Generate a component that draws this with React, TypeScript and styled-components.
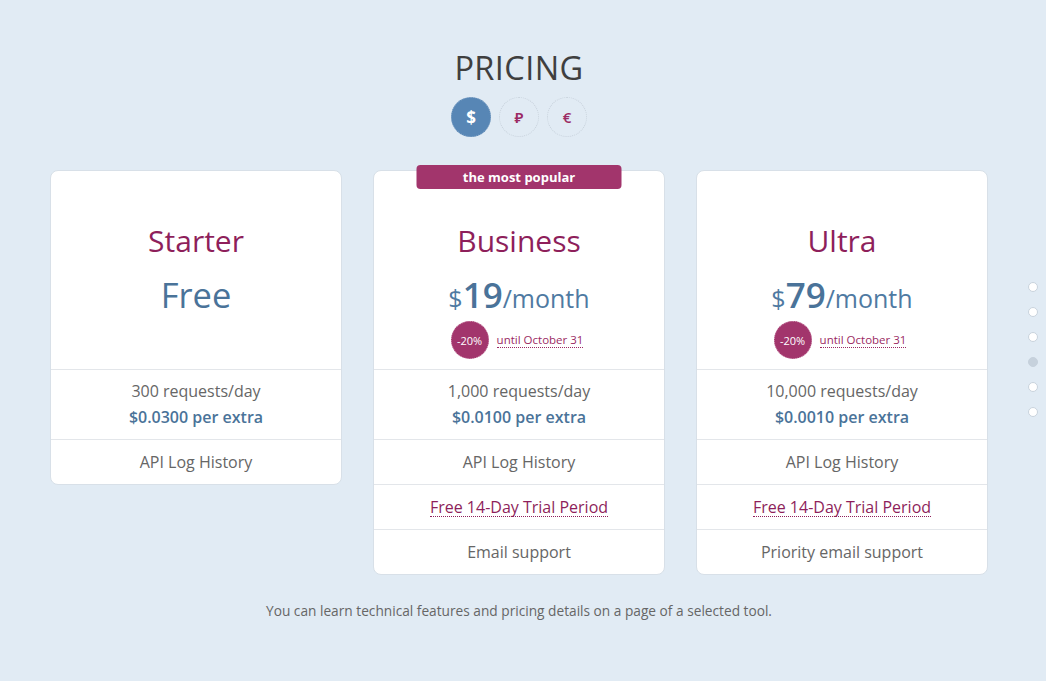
import React from "react";
import styled, { createGlobalStyle } from "styled-components";

const Global = createGlobalStyle`
  html, body { margin: 0; padding: 0; background: #e1ebf4; }
  body { font-family: "Open Sans", "Noto Sans", sans-serif; color: #666; }
  * { box-sizing: border-box; }
`;

const Page = styled.div`
  width: 1046px;
  height: 681px;
  position: relative;
  overflow: hidden;
  padding: 50px 0 0 50px;
`;

const Main = styled.main`
  width: 938px;
  display: flex;
  flex-direction: column;
  align-items: center;
`;

const Title = styled.h1`
  margin: 0;
  font-size: 32.5px;
  line-height: 36px;
  font-weight: 400;
  color: #3f3f3f;
  letter-spacing: 0.4px;
`;

const Currencies = styled.div`
  display: flex;
  gap: 8px;
  margin-top: 11px;
`;

const CurrencyButton = styled.button<{ $active?: boolean }>`
  width: 40px;
  height: 40px;
  border-radius: 50%;
  border: 1px dotted ${(p) => (p.$active ? "#7fa2c6" : "#c8d2dc")};
  background: ${(p) => (p.$active ? "#5786b5" : "transparent")};
  color: ${(p) => (p.$active ? "#ffffff" : "#9b2a63")};
  font-family: inherit;
  font-size: ${(p) => (p.$active ? "17px" : "15px")};
  font-weight: ${(p) => (p.$active ? 700 : 600)};
  display: flex;
  align-items: center;
  justify-content: center;
  padding: 0;
  cursor: pointer;
`;

const Cards = styled.div`
  display: flex;
  align-items: flex-start;
  gap: 31px;
  margin-top: 33px;
  width: 100%;
`;

const Card = styled.section`
  position: relative;
  width: 292px;
  flex: 0 0 292px;
  background: #fff;
  border: 1px solid #d8e0e8;
  border-radius: 8px;
`;

const Popular = styled.div`
  position: absolute;
  top: -6px;
  left: 50%;
  transform: translateX(-50%);
  width: 205px;
  height: 24px;
  border-radius: 4px;
  background: #a2356c;
  color: #fff;
  font-size: 13px;
  font-weight: 700;
  display: flex;
  align-items: center;
  justify-content: center;
`;

const Header = styled.div`
  height: 199px;
  border-bottom: 1px solid #e3e6ea;
  display: flex;
  flex-direction: column;
  align-items: center;
  padding-top: 52px;
`;

const PlanName = styled.h2`
  margin: 0;
  font-size: 30px;
  line-height: 36px;
  font-weight: 400;
  color: #8e1f5b;
`;

const Price = styled.div`
  margin-top: 16px;
  height: 40px;
  display: flex;
  align-items: baseline;
  justify-content: center;
  color: #4f7aa2;
  font-size: 25px;
  line-height: 40px;
`;

const Amount = styled.span<{ $big?: boolean }>`
  font-size: ${(p) => (p.$big ? "34.5px" : "35px")};
  font-weight: ${(p) => (p.$big ? 400 : 600)};
  color: #4a7399;
`;

const Discount = styled.div`
  margin-top: 6px;
  display: flex;
  align-items: center;
  gap: 8px;
  margin-left: -4px;
`;

const Badge = styled.span`
  width: 38px;
  height: 38px;
  border-radius: 50%;
  background: #a2356c;
  border: 1px dotted #c77aa0;
  color: #fff;
  font-size: 11px;
  display: flex;
  align-items: center;
  justify-content: center;
`;

const Until = styled.span`
  font-size: 11.5px;
  color: #9b2a63;
  border-bottom: 1px dotted #9b2a63;
  line-height: 14px;
`;

const Row = styled.div<{ $tall?: boolean }>`
  display: flex;
  flex-direction: column;
  align-items: center;
  justify-content: center;
  height: ${(p) => (p.$tall ? "70px" : "45px")};
  padding-bottom: ${(p) => (p.$tall ? "2px" : "0")};
  border-bottom: 1px solid #e3e6ea;
  font-size: 16px;
  color: #666;
  line-height: 26px;
  &:last-child { border-bottom: none; height: 44px; }
`;

const Extra = styled.span`
  font-weight: 600;
  color: #4a7399;
`;

const Trial = styled.span`
  color: #8e1f5b;
  font-weight: 500;
  line-height: 18px;
  border-bottom: 1px dotted #8e1f5b;
`;

const Footer = styled.p`
  margin: 26px 0 0;
  font-size: 13.7px;
  color: #666;
`;

const SideNav = styled.nav`
  position: absolute;
  right: 8px;
  top: 282px;
  display: flex;
  flex-direction: column;
  gap: 15px;
`;

const Dot = styled.span<{ $active?: boolean }>`
  width: 10px;
  height: 10px;
  border-radius: 50%;
  background: ${(p) => (p.$active ? "#c6d1dc" : "#fff")};
  border: 1px solid ${(p) => (p.$active ? "#c6d1dc" : "#c9d3dd")};
`;

type Plan = {
  name: string;
  price?: string;
  free?: boolean;
  requests: string;
  extra: string;
  popular?: boolean;
  trial?: boolean;
  support?: string;
};

const plans: Plan[] = [
  { name: "Starter", free: true, requests: "300 requests/day", extra: "$0.0300 per extra" },
  {
    name: "Business",
    price: "19",
    requests: "1,000 requests/day",
    extra: "$0.0100 per extra",
    popular: true,
    trial: true,
    support: "Email support",
  },
  {
    name: "Ultra",
    price: "79",
    requests: "10,000 requests/day",
    extra: "$0.0010 per extra",
    trial: true,
    support: "Priority email support",
  },
];

export default function App() {
  return (
    <Page>
      <Global />
      <Main>
        <Title>PRICING</Title>
        <Currencies>
          <CurrencyButton $active>$</CurrencyButton>
          <CurrencyButton>₽</CurrencyButton>
          <CurrencyButton>€</CurrencyButton>
        </Currencies>
        <Cards>
          {plans.map((p) => (
            <Card key={p.name}>
              {p.popular && <Popular>the most popular</Popular>}
              <Header>
                <PlanName>{p.name}</PlanName>
                {p.free ? (
                  <Price>
                    <Amount $big>Free</Amount>
                  </Price>
                ) : (
                  <>
                    <Price>
                      $<Amount>{p.price}</Amount>/month
                    </Price>
                    <Discount>
                      <Badge>-20%</Badge>
                      <Until>until October 31</Until>
                    </Discount>
                  </>
                )}
              </Header>
              <Row $tall>
                <span>{p.requests}</span>
                <Extra>{p.extra}</Extra>
              </Row>
              <Row>API Log History</Row>
              {p.trial && (
                <Row>
                  <Trial>Free 14-Day Trial Period</Trial>
                </Row>
              )}
              {p.support && <Row>{p.support}</Row>}
            </Card>
          ))}
        </Cards>
        <Footer>You can learn technical features and pricing details on a page of a selected tool.</Footer>
      </Main>
      <SideNav>
        {[0, 1, 2, 3, 4, 5].map((i) => (
          <Dot key={i} $active={i === 3} />
        ))}
      </SideNav>
    </Page>
  );
}
